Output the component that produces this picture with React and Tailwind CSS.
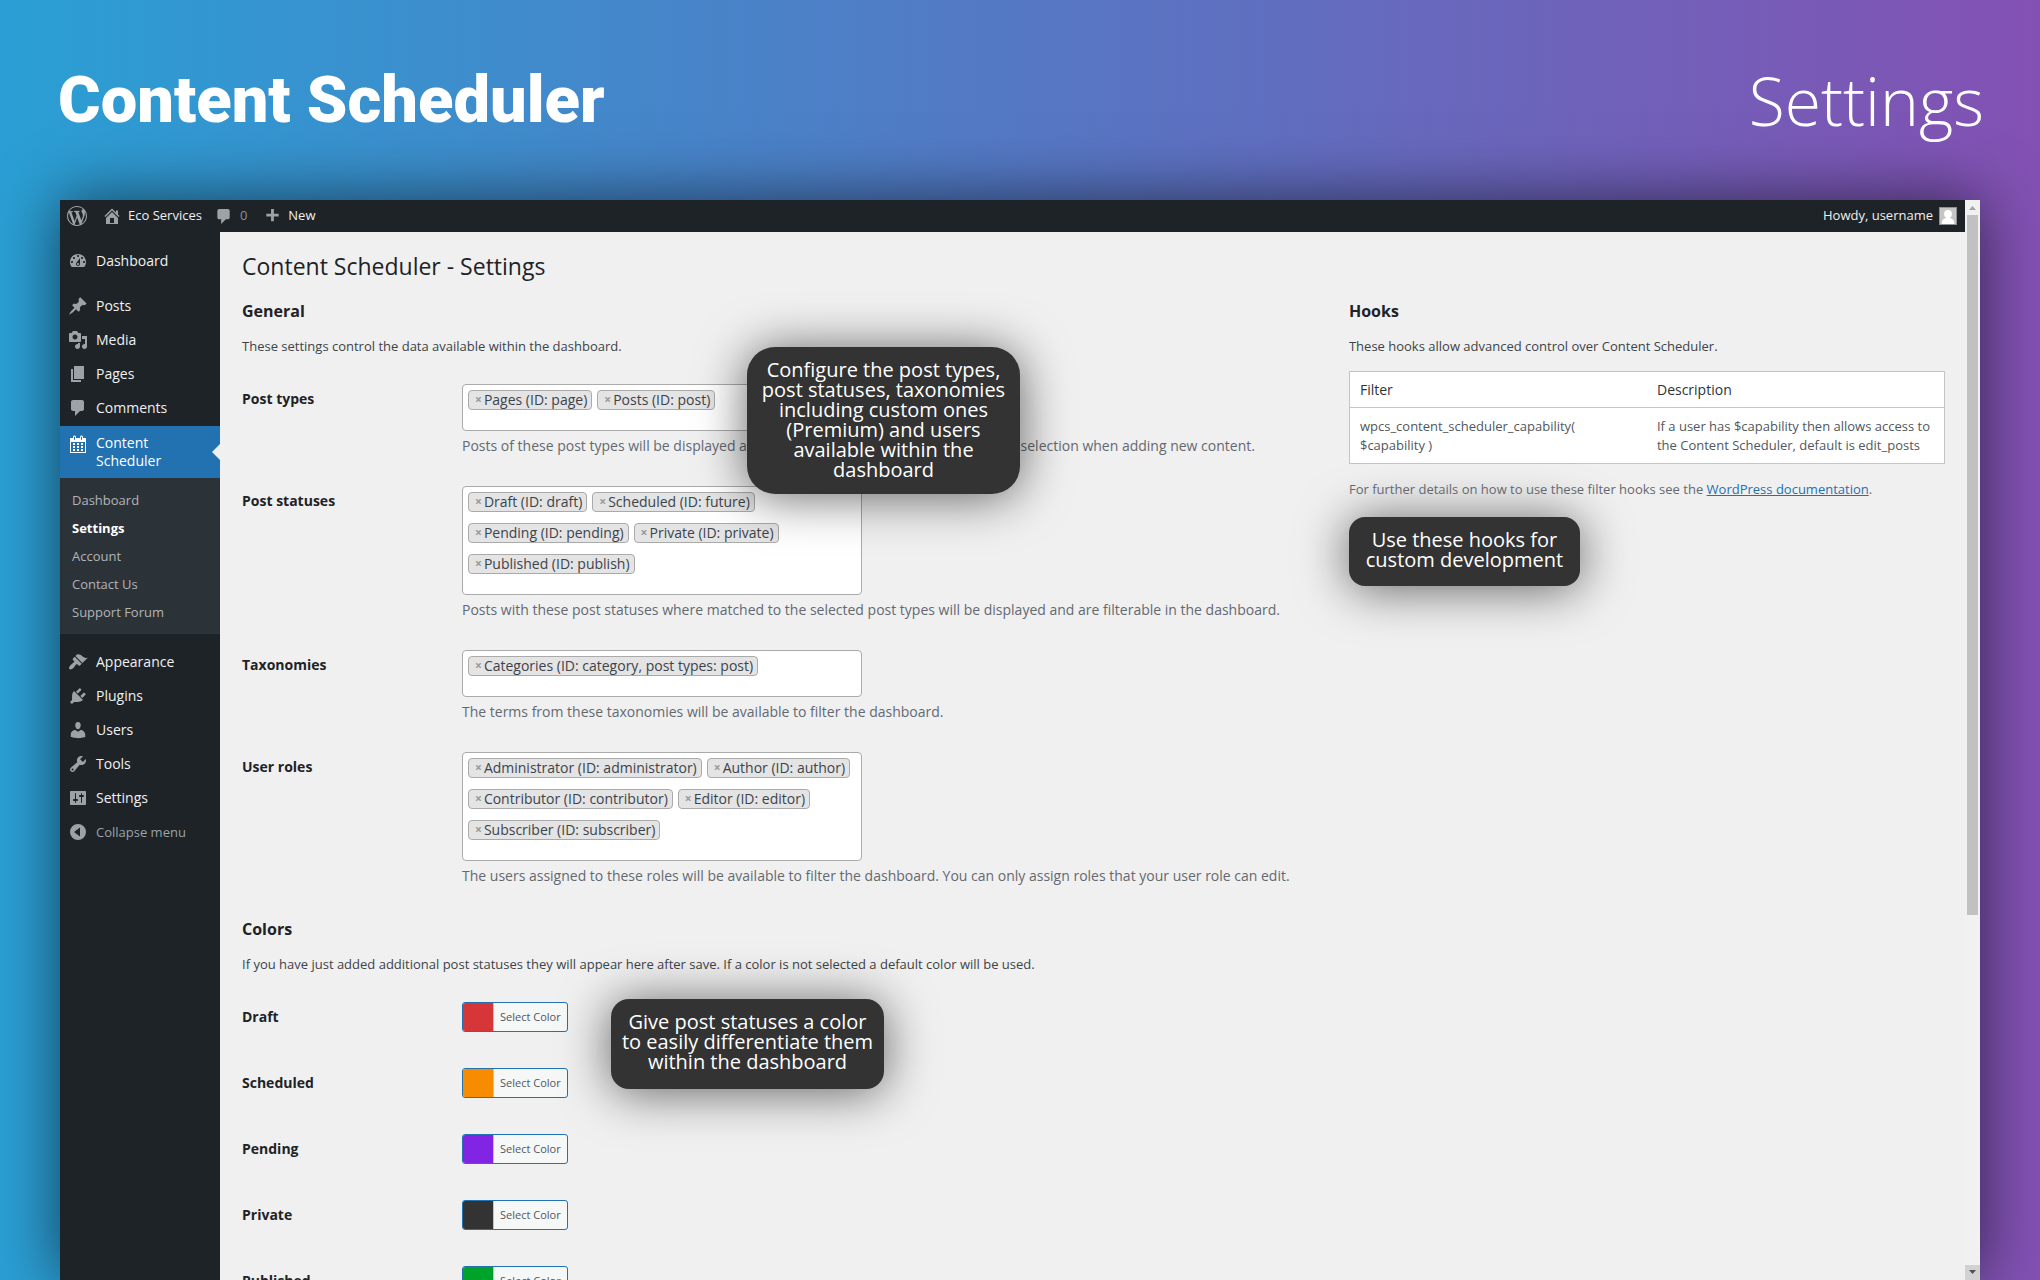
import React from "react";

const ICONS = {
  wordpress:
    "M20 10c0-5.51-4.49-10-10-10C4.48 0 0 4.49 0 10c0 5.52 4.48 10 10 10 5.51 0 10-4.48 10-10zM7.78 15.37L4.37 6.22c.55-.02 1.17-.08 1.17-.08.5-.06.44-1.13-.06-1.11 0 0-1.45.11-2.37.11-.18 0-.37 0-.58-.01C4.12 2.69 6.87 1.11 10 1.11c2.33 0 4.45.87 6.05 2.34-.68-.11-1.65.39-1.65 1.58 0 .74.45 1.36.9 2.1.35.61.55 1.36.55 2.46 0 1.49-1.4 5-1.4 5l-3.03-8.37c.54-.02.82-.17.82-.17.5-.05.44-1.25-.06-1.22 0 0-1.44.12-2.38.12-.87 0-2.33-.12-2.33-.12-.5-.03-.56 1.2-.06 1.22l.92.08 1.26 3.41zM17.41 10c.24-.64.74-1.87.43-4.25.7 1.29 1.05 2.71 1.05 4.25 0 3.29-1.73 6.24-4.4 7.78.97-2.59 1.94-5.2 2.92-7.78zM6.1 18.09C3.12 16.65 1.11 13.53 1.11 10c0-1.3.23-2.48.72-3.59C3.25 10.3 4.67 14.2 6.1 18.09zm4.03-6.63l2.58 6.98c-.86.29-1.76.45-2.71.45-.79 0-1.57-.11-2.29-.33.81-2.38 1.62-4.74 2.42-7.1z",
  home: "M16 8.5l1.53 1.53-1.06 1.06L10 4.6l-6.47 6.49-1.06-1.06L10 2.5l4 4v-2h2v4zm-6-2.46l6 5.99V18H4v-5.97zM12 17v-5H8v5h4z",
  plus: "M17 7v3h-5v5H9v-5H4V7h5V2h3v5h5z",
  dashboard:
    "M3.76 16h12.48c1.1-1.37 1.76-3.11 1.76-5 0-4.42-3.58-8-8-8s-8 3.58-8 8c0 1.89.66 3.63 1.76 5zM10 4c.55 0 1 .45 1 1s-.45 1-1 1-1-.45-1-1 .45-1 1-1zM6 6c.55 0 1 .45 1 1s-.45 1-1 1-1-.45-1-1 .45-1 1-1zm8 0c.55 0 1 .45 1 1s-.45 1-1 1-1-.45-1-1 .45-1 1-1zm-5.37 5.55L12 7v6c0 1.1-.9 2-2 2s-2-.9-2-2c0-.57.24-1.08.63-1.45zM4 10c.55 0 1 .45 1 1s-.45 1-1 1-1-.45-1-1 .45-1 1-1zm12 0c.55 0 1 .45 1 1s-.45 1-1 1-1-.45-1-1 .45-1 1-1zm-5 3c0-.55-.45-1-1-1s-1 .45-1 1 .45 1 1 1 1-.45 1-1z",
  posts:
    "M10.44 3.02l1.82-1.82 6.36 6.35-1.83 1.82c-1.05-.68-2.48-.57-3.41.36l-.75.75c-.92.93-1.04 2.35-.35 3.41l-1.83 1.82-2.41-2.41-2.8 2.79c-.42.42-3.38 2.71-3.8 2.29s1.86-3.39 2.28-3.81l2.79-2.79L4.1 9.36l1.83-1.82c1.05.69 2.48.57 3.4-.36l.75-.75c.93-.92 1.05-2.35.36-3.41z",
  media:
    "M13 11V4c0-.55-.45-1-1-1h-1.67L9 1H5L3.67 3H2c-.55 0-1 .45-1 1v7c0 .55.45 1 1 1h10c.55 0 1-.45 1-1zM7 4.5c1.38 0 2.5 1.12 2.5 2.5S8.38 9.5 7 9.5 4.5 8.38 4.5 7 5.62 4.5 7 4.5zM14 6h5v10.5c0 1.38-1.12 2.5-2.5 2.5S14 17.88 14 16.5s1.12-2.5 2.5-2.5c.17 0 .34.02.5.05V9h-3V6zm-4 8.05V13h2v3.5c0 1.38-1.12 2.5-2.5 2.5S7 17.88 7 16.5 8.12 14 9.5 14c.17 0 .34.02.5.05z",
  pages: "M6 15V2h10v13H6zm-1 1h8v2H3V5h2v11z",
  comments:
    "M5 2h9c1.1 0 2 .9 2 2v7c0 1.1-.9 2-2 2h-2l-5 5v-5H5c-1.1 0-2-.9-2-2V4c0-1.1.9-2 2-2z",
  calendar:
    "M15 4h3v15H2V4h3V3c0-.41.15-.76.44-1.06.29-.29.65-.44 1.06-.44s.77.15 1.06.44c.29.3.44.65.44 1.06v1h4V3c0-.41.15-.76.44-1.06.29-.29.65-.44 1.06-.44s.77.15 1.06.44c.29.3.44.65.44 1.06v1zM6 3v2.5c0 .14.05.26.15.36.09.09.21.14.35.14s.26-.05.35-.14c.1-.1.15-.22.15-.36V3c0-.14-.05-.26-.15-.35-.09-.1-.21-.15-.35-.15s-.26.05-.35.15c-.1.09-.15.21-.15.35zm7 0v2.5c0 .14.05.26.14.36.1.09.22.14.36.14s.26-.05.36-.14c.09-.1.14-.22.14-.36V3c0-.14-.05-.26-.14-.35-.1-.1-.22-.15-.36-.15s-.26.05-.36.15c-.09.09-.14.21-.14.35zm4 15V8H3v10h14zM7 9v2H5V9h2zm2 0h2v2H9V9zm4 2V9h2v2h-2zm-6 1v2H5v-2h2zm2 0h2v2H9v-2zm4 2v-2h2v2h-2zm-6 1v2H5v-2h2zm4 2H9v-2h2v2zm4 0h-2v-2h2v2z",
  appearance:
    "M14.48 11.06L7.41 3.99l1.5-1.5c.5-.56 2.3-.47 3.51.32 1.21.8 1.43 1.28 2.91 2.1 1.18.64 2.45 1.26 4.45.85zm-.71.71L6.7 4.7 4.93 6.47c-.39.39-.39 1.02 0 1.41l1.06 1.06c.39.39.39 1.03 0 1.42-.6.6-1.43 1.11-2.21 1.69-.35.26-.7.53-1.01.84C1.43 14.23.4 16.08 1.4 17.07c.99 1 2.84-.03 4.18-1.36.31-.31.58-.66.85-1.02.57-.78 1.08-1.61 1.69-2.21.39-.39 1.02-.39 1.41 0l1.06 1.06c.39.39 1.02.39 1.41 0z",
  plugins:
    "M13.11 4.36L9.87 7.6 8 5.73l3.24-3.24c.35-.34 1.05-.2 1.56.32.52.51.66 1.21.31 1.55zm-8 1.77l.91-1.12 9.01 9.01-1.19.84c-.71.71-2.63 1.16-3.82 1.16H6.14L4.9 17.26c-.59.59-1.54.59-2.12 0-.59-.58-.59-1.53 0-2.12l1.24-1.24v-3.88c0-1.13.4-3.19 1.09-3.89zm7.26 3.97l3.24-3.24c.34-.35 1.04-.21 1.55.31.52.51.66 1.21.31 1.55l-3.24 3.25z",
  users:
    "M10 9.25c-2.27 0-2.73-3.44-2.73-3.44C7 4.02 7.82 2 9.97 2c2.16 0 2.98 2.02 2.71 3.81 0 0-.41 3.44-2.68 3.44zm0 2.57L12.72 10c2.39 0 4.52 2.33 4.52 4.53v2.49s-3.65 1.13-7.24 1.13c-3.65 0-7.24-1.13-7.24-1.13v-2.49c0-2.25 1.94-4.48 4.47-4.48z",
  tools:
    "M16.68 9.77c-1.34 1.34-3.3 1.67-4.95.99l-5.41 6.52c-.99.99-2.59.99-3.58 0s-.99-2.59 0-3.57l6.52-5.42c-.68-1.65-.35-3.61.99-4.95 1.28-1.28 3.12-1.62 4.72-1.06l-2.89 2.89 2.82 2.82 2.86-2.87c.53 1.58.18 3.39-1.08 4.65zM3.81 16.21c.4.39 1.04.39 1.43 0 .4-.4.4-1.04 0-1.43-.39-.4-1.03-.4-1.43 0-.39.39-.39 1.03 0 1.43z",
  settings:
    "M18 16V4c0-.55-.45-1-1-1H3c-.55 0-1 .45-1 1v12c0 .55.45 1 1 1h14c.55 0 1-.45 1-1zM8 11h1c.55 0 1 .45 1 1s-.45 1-1 1H8v1.5c0 .28-.22.5-.5.5s-.5-.22-.5-.5V13H6c-.55 0-1-.45-1-1s.45-1 1-1h1V5.5c0-.28.22-.5.5-.5s.5.22.5.5V11zm5-2h-1c-.55 0-1-.45-1-1s.45-1 1-1h1V5.5c0-.28.22-.5.5-.5s.5.22.5.5V7h1c.55 0 1 .45 1 1s-.45 1-1 1h-1v5.5c0 .28-.22.5-.5.5s-.5-.22-.5-.5V9z",
  collapse: "M10 2a8 8 0 1 0 0 16a8 8 0 0 0 0-16zM12 5.6v8.8L6 10z",
};

function Icon({ name, className = "size-5" }) {
  return (
    <svg viewBox="0 0 20 20" className={`shrink-0 ${className}`} fill="currentColor" fillRule="evenodd" aria-hidden="true">
      <path d={ICONS[name]} />
    </svg>
  );
}

function AdminBar() {
  return (
    <header className="flex h-8 items-center bg-[#1d2327] pr-2 pl-[7px] text-[13px] text-[#f0f0f1]">
      <a href="#about" aria-label="About WordPress" className="text-[#9ca2a7]">
        <Icon name="wordpress" />
      </a>
      <a href="#site" className="ml-[15px] flex items-center gap-[6px]">
        <Icon name="home" className="size-5 text-[#9ca2a7]" />
        Eco Services
      </a>
      <a href="#comments" className="ml-3 flex items-center gap-[6px] text-[#8c9196]">
        <Icon name="comments" className="size-5 pt-px text-[#9ca2a7]" />0
      </a>
      <a href="#new" className="ml-[15px] flex items-center gap-[6px]">
        <Icon name="plus" className="size-5 pt-px text-[#9ca2a7]" />
        New
      </a>
      <a href="#profile" className="ml-auto flex items-center gap-[6px]">
        Howdy, username
        <svg viewBox="0 0 18 18" className="size-[18px]" aria-hidden="true">
          <rect width="18" height="18" fill="#8c8f94" />
          <rect x="1" y="1" width="16" height="16" fill="#c5c5c5" />
          <circle cx="9" cy="7" r="3.9" fill="#fff" />
          <path d="M7 9h4v2c3 .6 4.400 2.500 4.400 6H2.600c0-3.500 1.400-5.400 4.400-6z" fill="#fff" />
        </svg>
      </a>
    </header>
  );
}

function MenuItem({ icon, children }) {
  return (
    <a href="#menu" className="flex h-[34px] items-center gap-2 px-2 text-[#f0f0f1]">
      <Icon name={icon} className="size-5 text-[#9ca2a7]" />
      {children}
    </a>
  );
}

function Sidebar() {
  return (
    <nav className="w-40 shrink-0 bg-[#1d2327] pt-3 text-sm leading-[18px]">
      <MenuItem icon="dashboard">Dashboard</MenuItem>
      <div className="mt-[11px] pb-px">
        <MenuItem icon="posts">Posts</MenuItem>
        <MenuItem icon="media">Media</MenuItem>
        <MenuItem icon="pages">Pages</MenuItem>
        <MenuItem icon="comments">Comments</MenuItem>
      </div>
      <a href="#scheduler" className="relative flex h-[52px] gap-2 bg-[#2271b1] px-2 pt-2 text-white">
        <Icon name="calendar" />
        <span>
          Content
          <br />
          Scheduler
        </span>
        <svg viewBox="0 0 8 16" className="absolute top-[18px] right-0 h-4 w-2" aria-hidden="true">
          <path d="M8 0v16L0 8z" fill="#f0f0f0" />
        </svg>
      </a>
      <ul className="bg-[#2c3338] px-3 py-2 text-[13px] text-[#b0b4b8]">
        {["Dashboard", "Settings", "Account", "Contact Us", "Support Forum"].map((label) => (
          <li key={label} className="flex h-7 items-center">
            <a href="#sub" className={label === "Settings" ? "font-bold text-white" : ""}>
              {label}
            </a>
          </li>
        ))}
      </ul>
      <div className="mt-[11px]">
        <MenuItem icon="appearance">Appearance</MenuItem>
        <MenuItem icon="plugins">Plugins</MenuItem>
        <MenuItem icon="users">Users</MenuItem>
        <MenuItem icon="tools">Tools</MenuItem>
        <MenuItem icon="settings">Settings</MenuItem>
        <button type="button" className="flex h-[34px] items-center gap-2 px-2 text-[13px] text-[#9ca2a7]">
          <Icon name="collapse" />
          Collapse menu
        </button>
      </div>
    </nav>
  );
}

function TagField({ label, tags, help }) {
  return (
    <div className="flex" role="group" aria-label={label}>
      <div className="w-[220px] shrink-0 pt-[5px] text-sm font-bold text-[#1d2327]">{label}</div>
      <div className="min-w-0 flex-1">
        <ul className="flex w-[400px] flex-wrap gap-x-[5px] gap-y-[11px] rounded-[4px] border border-[#aaa] bg-white px-[5px] pt-[5px] pb-5">
          {tags.map((tag) => (
            <li
              key={tag}
              className="flex h-5 items-center gap-[2px] rounded-[4px] border border-[#aaa] bg-[#e4e4e4] pr-1 pl-[6px] text-sm leading-[18px] whitespace-nowrap text-[#3c434a]"
            >
              <button type="button" aria-label={`Remove ${tag}`} className="text-xs leading-[18px] font-bold text-[#999]">
                ×
              </button>
              {tag}
            </li>
          ))}
        </ul>
        <p className="mt-1 text-sm leading-[21px] text-[#646970]">{help}</p>
      </div>
    </div>
  );
}

function ColorField({ label, swatch }) {
  return (
    <div className="flex h-[30px] items-center">
      <div className="w-[220px] shrink-0 text-sm font-bold text-[#1d2327]">{label}</div>
      <button
        type="button"
        aria-label={`${label}: Select Color`}
        className="flex h-[30px] overflow-hidden rounded-[3px] border border-[#2271b1] bg-[#f6f7f7] text-[11px] leading-7 text-[#50575e]"
      >
        <span className={`w-[30px] ${swatch}`} />
        <span className="border-l border-[#c3c4c7] px-[6px]">Select Color</span>
      </button>
    </div>
  );
}

function Callout({ className, children }) {
  return (
    <div
      role="note"
      className={`bg-[#333] pt-[13px] text-center text-xl leading-5 text-white shadow-[0_3px_50px_rgba(0,0,0,0.6)] ${className}`}
    >
      {children}
    </div>
  );
}

function SectionHead({ title, children }) {
  return (
    <>
      <h2 className="text-base leading-6 font-bold text-[#1d2327]">{title}</h2>
      <p className="mt-[13px] text-[13px] leading-5 text-[#3c434a]">{children}</p>
    </>
  );
}

function GeneralSection() {
  return (
    <section className="relative">
      <SectionHead title="General">These settings control the data available within the dashboard.</SectionHead>
      <div className="mt-7 flex flex-col gap-[30px]">
        <TagField
          label="Post types"
          tags={["Pages (ID: page)", "Posts (ID: post)"]}
          help="Posts of these post types will be displayed and are filterable in the dashboard and for selection when adding new content."
        />
        <TagField
          label="Post statuses"
          tags={[
            "Draft (ID: draft)",
            "Scheduled (ID: future)",
            "Pending (ID: pending)",
            "Private (ID: private)",
            "Published (ID: publish)",
          ]}
          help="Posts with these post statuses where matched to the selected post types will be displayed and are filterable in the dashboard."
        />
        <TagField
          label="Taxonomies"
          tags={["Categories (ID: category, post types: post)"]}
          help="The terms from these taxonomies will be available to filter the dashboard."
        />
        <TagField
          label="User roles"
          tags={[
            "Administrator (ID: administrator)",
            "Author (ID: author)",
            "Contributor (ID: contributor)",
            "Editor (ID: editor)",
            "Subscriber (ID: subscriber)",
          ]}
          help="The users assigned to these roles will be available to filter the dashboard. You can only assign roles that your user role can edit."
        />
      </div>
      <Callout className="absolute top-12 left-[505px] w-[273px] rounded-[28px] px-3 pb-[14px]">
        Configure the post types, post statuses, taxonomies including custom ones (Premium) and users available within
        the dashboard
      </Callout>
    </section>
  );
}

function ColorsSection() {
  return (
    <section className="relative mt-[31px]">
      <SectionHead title="Colors">
        If you have just added additional post statuses they will appear here after save. If a color is not selected a
        default color will be used.
      </SectionHead>
      <div className="mt-7 flex flex-col gap-9">
        <ColorField label="Draft" swatch="bg-[#d63638]" />
        <ColorField label="Scheduled" swatch="bg-[#f88c00]" />
        <ColorField label="Pending" swatch="bg-[#8224e3]" />
        <ColorField label="Private" swatch="bg-[#333333]" />
        <ColorField label="Published" swatch="bg-[#00a32a]" />
      </div>
      <Callout className="absolute top-[82px] left-[369px] w-[273px] rounded-[18px] px-2 pb-[17px]">
        Give post statuses a color to easily differentiate them within the dashboard
      </Callout>
    </section>
  );
}

function HooksSection() {
  return (
    <section className="w-[35%] shrink-0">
      <SectionHead title="Hooks">These hooks allow advanced control over Content Scheduler.</SectionHead>
      <table className="mt-[15px] w-full table-fixed border border-[#c3c4c7] bg-white text-left">
        <thead>
          <tr className="h-9 border-b border-[#c3c4c7] text-sm text-[#2c3338]">
            <th className="px-[10px] font-normal">Filter</th>
            <th className="px-[10px] font-normal">Description</th>
          </tr>
        </thead>
        <tbody>
          <tr className="h-14 text-[13px] leading-[19px] text-[#50575e]">
            <td className="px-[10px]">
              wpcs_content_scheduler_capability(
              <br />
              $capability )
            </td>
            <td className="px-[10px]">
              If a user has $capability then allows access to
              <br />
              the Content Scheduler, default is edit_posts
            </td>
          </tr>
        </tbody>
      </table>
      <p className="mt-[15px] text-[13px] leading-5 text-[#646970]">
        For further details on how to use these filter hooks see the{" "}
        <a href="#docs" className="text-[#2271b1] underline">
          WordPress documentation
        </a>
        .
      </p>
      <Callout className="mt-[18px] w-[231px] rounded-[16px] px-3 pb-4">
        Use these hooks for custom development
      </Callout>
    </section>
  );
}

function Scrollbar() {
  return (
    <div className="flex w-[15px] shrink-0 flex-col bg-[#f1f1f1]" aria-hidden="true">
      <svg viewBox="0 0 15 15" className="size-[15px]">
        <path d="M4 10L7.500 6L11 10z" fill="#a3a3a3" />
      </svg>
      <div className="flex-1">
        <div className="mx-auto h-2/3 w-[11px] bg-[#c1c1c1]" />
      </div>
      <svg viewBox="0 0 15 15" className="size-[15px] bg-[#d2d2d2]">
        <path d="M4 5L7.500 9L11 5z" fill="#505050" />
      </svg>
    </div>
  );
}

export default function App() {
  return (
    <div className="flex h-screen flex-col overflow-hidden bg-linear-to-r/srgb from-[#2a9fd4] via-[#5578c4] to-[#8351b3] font-['Open_Sans','Noto_Sans',sans-serif]">
      <div className="flex h-[200px] shrink-0 items-center justify-between pr-[56px] pl-[58px] text-white">
        <div className="font-['Roboto',sans-serif] text-[65px] leading-none font-black">Content Scheduler</div>
        <div className="text-[66px] leading-none font-light">Settings</div>
      </div>
      <div className="mx-[60px] flex min-h-0 flex-1 shadow-[0_0_60px_rgba(0,0,0,0.6)]">
        <div className="flex min-w-0 flex-1 flex-col">
          <AdminBar />
          <div className="flex min-h-0 flex-1">
            <Sidebar />
            <main className="min-w-0 flex-1 overflow-hidden bg-[#f0f0f0] pt-[19px] pr-5 pl-[22px]">
              <h1 className="text-[23px] leading-[30px] text-[#1d2327]">Content Scheduler - Settings</h1>
              <div className="mt-[18px] flex">
                <div className="min-w-0 flex-1">
                  <GeneralSection />
                  <ColorsSection />
                </div>
                <HooksSection />
              </div>
            </main>
          </div>
        </div>
        <Scrollbar />
      </div>
    </div>
  );
}
